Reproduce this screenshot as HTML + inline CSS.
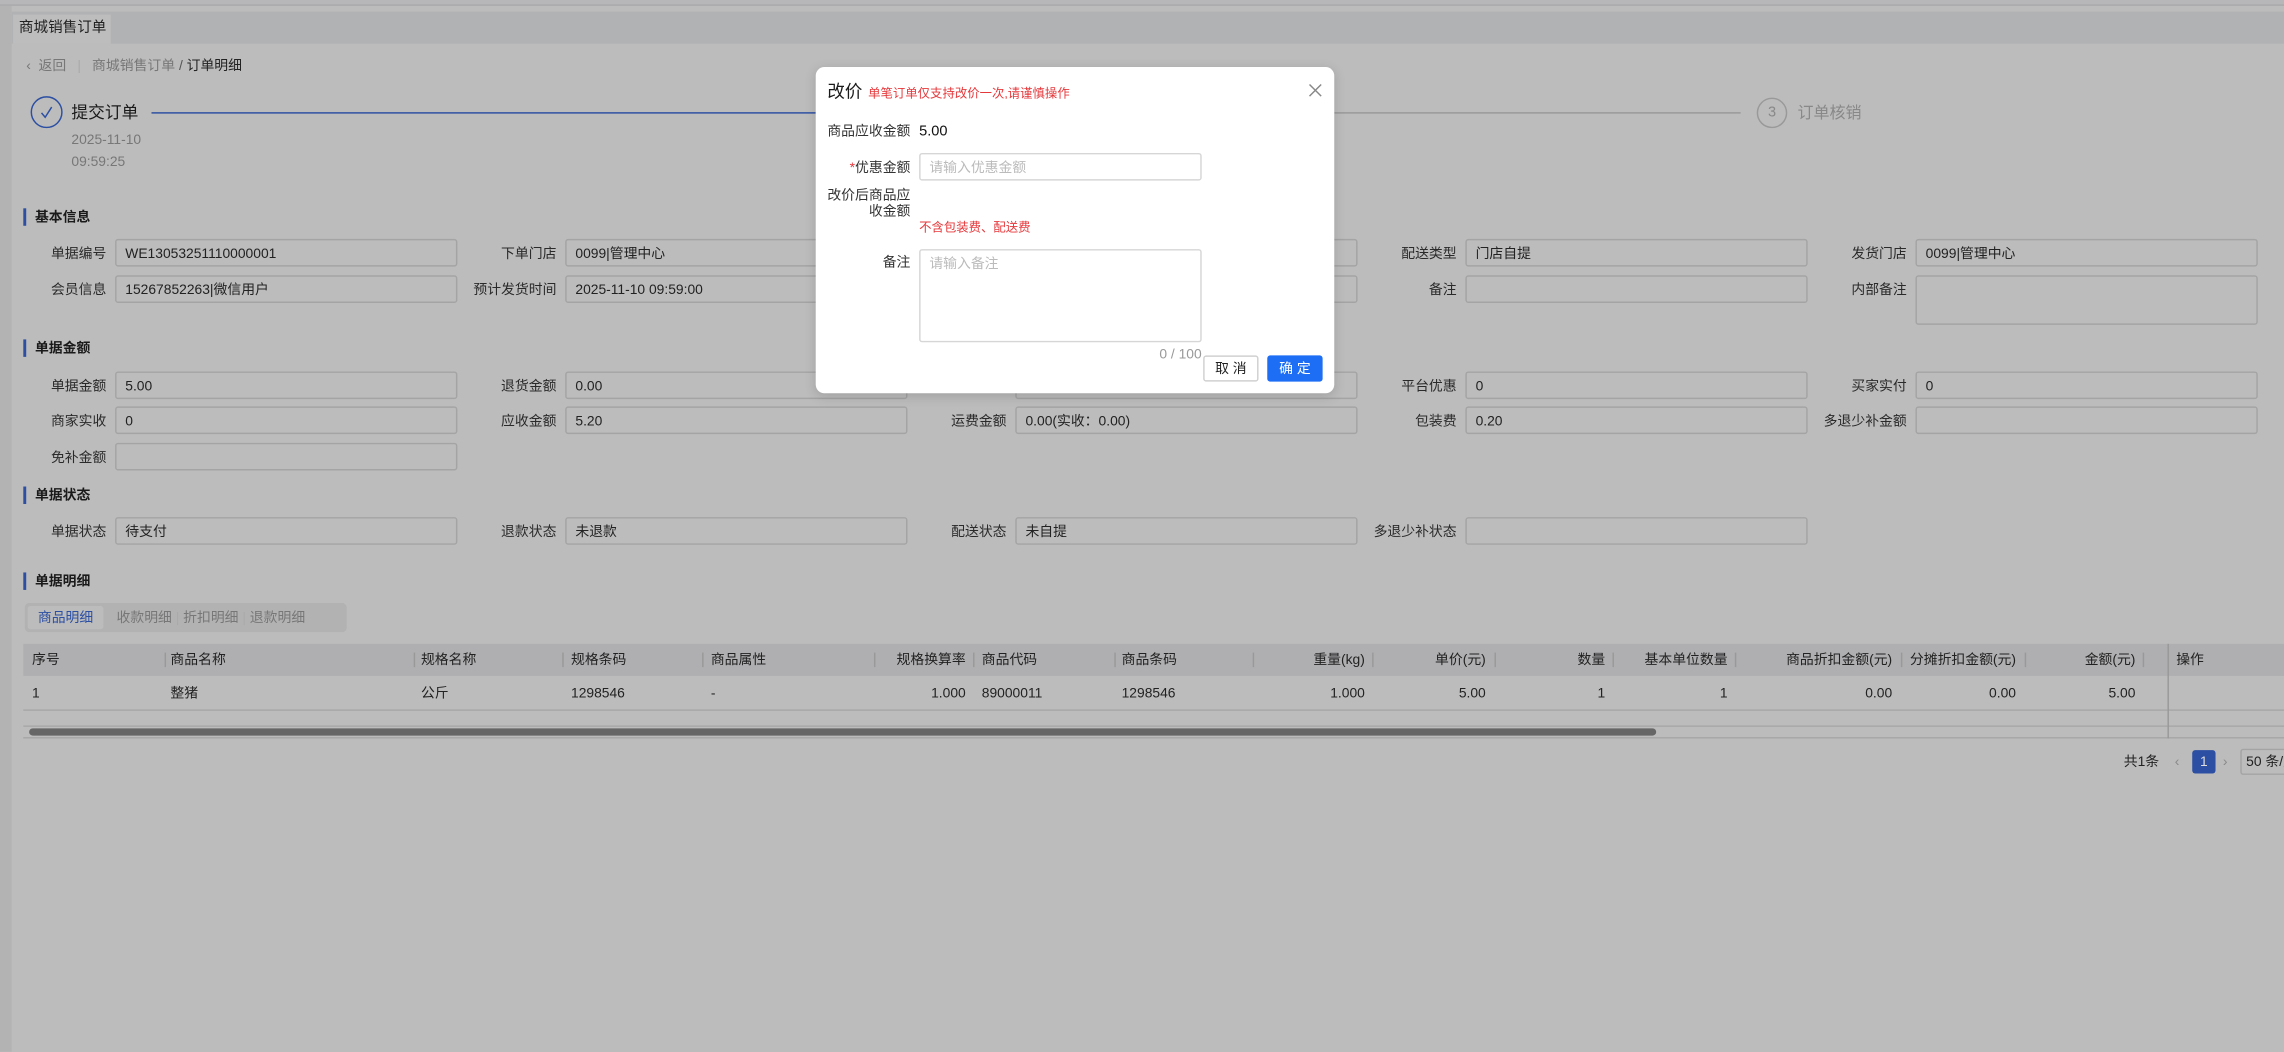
<!DOCTYPE html>
<html><head><meta charset="utf-8">
<style>
*{box-sizing:border-box;margin:0;padding:0}
html,body{width:2284px;height:1052px;overflow:hidden;background:#bcbcbc}
#w{position:absolute;left:0;top:0;width:1568px;height:722px;transform:scale(1.45663);transform-origin:0 0;background:#bcbcbc;font-family:"Liberation Sans","Noto Sans CJK SC",sans-serif;color:#222;font-size:9.5px}
.a{position:absolute;white-space:nowrap}
.lb{position:absolute;text-align:right;width:110px;line-height:19px;padding-top:1px;color:#2a2a2a}
.in{position:absolute;width:235px;height:19px;border:1px solid #a4a4a4;border-radius:2px;line-height:18px;padding-top:1px;padding-left:6px;color:#222}
.sec{position:absolute;left:16px;height:12px;border-left:2.5px solid #2c4fa3;padding-left:6px;line-height:13px;font-weight:bold;font-size:9.5px;color:#1a1a1a}
.th{position:absolute;top:443px;height:22px;line-height:22px}
.td{position:absolute;top:465px;height:23px;line-height:23px}
.sep{position:absolute;top:448px;width:1px;height:10px;background:#999}
.r{text-align:right}
</style></head><body><div id="w">
<div class="a" style="left:0;top:0;width:1568px;height:4px;background:#b7b7b9;border-bottom:1px solid #a9a9ab"></div>
<div class="a" style="left:0;top:4px;width:8px;height:718px;background:#b3b3b4"></div>
<div class="a" style="left:8px;top:8px;width:1560px;height:22px;background:#b1b2b4"></div>
<div class="a" style="left:9px;top:10px;width:67px;height:20px;background:#bdbdbd;line-height:20px;padding-left:4px;font-size:10px;color:#222">商城销售订单</div>
<div class="a" style="left:18px;top:40px;line-height:12px;color:#777">‹&nbsp; 返回 <span style="color:#aaa;margin:0 5px">|</span> 商城销售订单 <span style="color:#555">/</span> <span style="color:#222">订单明细</span></div>
<!-- steps -->
<div class="a" style="left:21px;top:66px;width:22px;height:22px;border:1px solid #2c4fa3;border-radius:50%"></div>
<svg class="a" style="left:26px;top:71px" width="12" height="12" viewBox="0 0 12 12"><path d="M2.5 6.5L5 9.5L9.5 2.5" fill="none" stroke="#2c4fa3" stroke-width="1"/></svg>
<div class="a" style="left:49px;top:70px;font-size:11.5px;line-height:16px;color:#1a1a1a">提交订单</div>
<div class="a" style="left:104px;top:77px;width:456px;height:1px;background:#2c4fa3"></div>
<div class="a" style="left:916px;top:77px;width:279px;height:1px;background:#999"></div>
<div class="a" style="left:1206px;top:67px;width:21px;height:21px;border:1px solid #999;border-radius:50%;color:#888;text-align:center;line-height:19px;font-size:10px">3</div>
<div class="a" style="left:1234px;top:70px;font-size:11px;line-height:16px;color:#888">订单核销</div>
<div class="a" style="left:49px;top:91px;color:#777;line-height:12px">2025-11-10</div>
<div class="a" style="left:49px;top:106px;color:#777;line-height:12px">09:59:25</div>

<div class="sec" style="top:143px">基本信息</div>
<div class="lb" style="left:-37px;top:164px">单据编号</div><div class="in" style="left:79px;top:164px">WE13053251110000001</div>
<div class="lb" style="left:272px;top:164px">下单门店</div><div class="in" style="left:388px;top:164px">0099|管理中心</div>
<div class="in" style="left:697px;top:164px"></div>
<div class="lb" style="left:890px;top:164px">配送类型</div><div class="in" style="left:1006px;top:164px">门店自提</div>
<div class="lb" style="left:1199px;top:164px">发货门店</div><div class="in" style="left:1315px;top:164px">0099|管理中心</div>
<div class="lb" style="left:-37px;top:189px">会员信息</div><div class="in" style="left:79px;top:189px">15267852263|微信用户</div>
<div class="lb" style="left:272px;top:189px">预计发货时间</div><div class="in" style="left:388px;top:189px">2025-11-10 09:59:00</div>
<div class="in" style="left:697px;top:189px"></div>
<div class="lb" style="left:890px;top:189px">备注</div><div class="in" style="left:1006px;top:189px"></div>
<div class="lb" style="left:1199px;top:189px">内部备注</div><div class="in" style="left:1315px;top:189px;height:34px"></div>

<div class="sec" style="top:233px">单据金额</div>
<div class="lb" style="left:-37px;top:255px">单据金额</div><div class="in" style="left:79px;top:255px">5.00</div>
<div class="lb" style="left:272px;top:255px">退货金额</div><div class="in" style="left:388px;top:255px">0.00</div>
<div class="in" style="left:697px;top:255px"></div>
<div class="lb" style="left:890px;top:255px">平台优惠</div><div class="in" style="left:1006px;top:255px">0</div>
<div class="lb" style="left:1199px;top:255px">买家实付</div><div class="in" style="left:1315px;top:255px">0</div>
<div class="lb" style="left:-37px;top:279px">商家实收</div><div class="in" style="left:79px;top:279px">0</div>
<div class="lb" style="left:272px;top:279px">应收金额</div><div class="in" style="left:388px;top:279px">5.20</div>
<div class="lb" style="left:581px;top:279px">运费金额</div><div class="in" style="left:697px;top:279px">0.00(实收：0.00)</div>
<div class="lb" style="left:890px;top:279px">包装费</div><div class="in" style="left:1006px;top:279px">0.20</div>
<div class="lb" style="left:1199px;top:279px">多退少补金额</div><div class="in" style="left:1315px;top:279px"></div>
<div class="lb" style="left:-37px;top:304px">免补金额</div><div class="in" style="left:79px;top:304px"></div>

<div class="sec" style="top:334px">单据状态</div>
<div class="lb" style="left:-37px;top:355px">单据状态</div><div class="in" style="left:79px;top:355px">待支付</div>
<div class="lb" style="left:272px;top:355px">退款状态</div><div class="in" style="left:388px;top:355px">未退款</div>
<div class="lb" style="left:581px;top:355px">配送状态</div><div class="in" style="left:697px;top:355px">未自提</div>
<div class="lb" style="left:890px;top:355px">多退少补状态</div><div class="in" style="left:1006px;top:355px"></div>

<div class="sec" style="top:393px">单据明细</div>
<div class="a" style="left:17px;top:414px;width:221px;height:20px;background:#b2b2b3;border-radius:3px"></div>
<div class="a" style="left:19px;top:416px;width:52px;height:16px;background:#bcbcbd;border-radius:2px;color:#2c4fa3;text-align:center;line-height:17px">商品明细</div>
<div class="a" style="left:80px;top:416px;line-height:17px;color:#777">收款明细 <span style="color:#aaa">|</span> 折扣明细 <span style="color:#aaa">|</span> 退款明细</div>

<div class="a" style="left:16px;top:442px;width:1552px;height:22px;background:#afafb1"></div>
<div class="a" style="left:16px;top:487px;width:1552px;height:1px;background:#a7a7a7"></div>
<div class="a" style="left:16px;top:498px;width:1552px;height:1px;background:#a7a7a7"></div>
<div class="a" style="left:16px;top:506px;width:1552px;height:1px;background:#a7a7a7"></div>
<div class="a" style="left:20px;top:500px;width:1117px;height:5px;background:#666;border-radius:3px"></div>
<div class="a" style="left:1488px;top:442px;width:1px;height:65px;background:#999"></div>
<div class="sep" style="left:113px"></div><div class="sep" style="left:284px"></div><div class="sep" style="left:386px"></div><div class="sep" style="left:482px"></div><div class="sep" style="left:600px"></div><div class="sep" style="left:668px"></div><div class="sep" style="left:765px"></div><div class="sep" style="left:860px"></div><div class="sep" style="left:942px"></div><div class="sep" style="left:1026px"></div><div class="sep" style="left:1107px"></div><div class="sep" style="left:1191px"></div><div class="sep" style="left:1305px"></div><div class="sep" style="left:1390px"></div><div class="sep" style="left:1471px"></div>
<div class="th" style="left:22px">序号</div><div class="th" style="left:117px">商品名称</div><div class="th" style="left:289px">规格名称</div><div class="th" style="left:392px">规格条码</div><div class="th" style="left:488px">商品属性</div>
<div class="th r" style="left:563px;width:100px">规格换算率</div><div class="th" style="left:674px">商品代码</div><div class="th" style="left:770px">商品条码</div>
<div class="th r" style="left:837px;width:100px">重量(kg)</div><div class="th r" style="left:920px;width:100px">单价(元)</div><div class="th r" style="left:1002px;width:100px">数量</div><div class="th r" style="left:1086px;width:100px">基本单位数量</div><div class="th r" style="left:1199px;width:100px">商品折扣金额(元)</div><div class="th r" style="left:1284px;width:100px">分摊折扣金额(元)</div><div class="th r" style="left:1366px;width:100px">金额(元)</div><div class="th" style="left:1494px">操作</div>
<div class="td" style="left:22px">1</div><div class="td" style="left:117px">整猪</div><div class="td" style="left:289px">公斤</div><div class="td" style="left:392px">1298546</div><div class="td" style="left:488px">-</div>
<div class="td r" style="left:563px;width:100px">1.000</div><div class="td" style="left:674px">89000011</div><div class="td" style="left:770px">1298546</div>
<div class="td r" style="left:837px;width:100px">1.000</div><div class="td r" style="left:920px;width:100px">5.00</div><div class="td r" style="left:1002px;width:100px">1</div><div class="td r" style="left:1086px;width:100px">1</div><div class="td r" style="left:1199px;width:100px">0.00</div><div class="td r" style="left:1284px;width:100px">0.00</div><div class="td r" style="left:1366px;width:100px">5.00</div>

<div class="a" style="left:1458px;top:517px;line-height:14px">共1条</div>
<div class="a" style="left:1493px;top:517px;line-height:14px;color:#888">‹</div>
<div class="a" style="left:1505px;top:515px;width:16px;height:16px;background:#2c4fa3;border-radius:2px;color:#ddd;text-align:center;line-height:17px">1</div>
<div class="a" style="left:1526px;top:517px;line-height:14px;color:#888">›</div>
<div class="a" style="left:1538px;top:514px;width:40px;height:18px;border:1px solid #a4a4a4;border-radius:2px;line-height:17px;padding-left:3px">50 条/页</div>

<!-- modal -->
<div class="a" style="left:560px;top:46px;width:356px;height:224px;background:#fff;border-radius:6px;box-shadow:0 2px 8px rgba(0,0,0,.15)"></div>
<div class="a" style="left:568px;top:55px;font-size:12px;line-height:16px;color:#1a1a1a">改价</div>
<div class="a" style="left:596px;top:58px;font-size:8.5px;line-height:12px;color:#e5383b">单笔订单仅支持改价一次,请谨慎操作</div>
<svg class="a" style="left:898px;top:57px" width="10" height="10" viewBox="0 0 10 10"><path d="M1 1L9 9M9 1L1 9" stroke="#888" stroke-width="1"/></svg>
<div class="a" style="left:515px;top:84px;width:110px;text-align:right;line-height:14px;color:#333">商品应收金额</div>
<div class="a" style="left:631px;top:84px;line-height:14px;font-size:10px;color:#111">5.00</div>
<div class="a" style="left:515px;top:109px;width:110px;text-align:right;line-height:14px;color:#333"><span style="color:#e5383b">*</span>优惠金额</div>
<div class="a" style="left:631px;top:105px;width:194px;height:19px;border:1px solid #d6d6d6;border-radius:2px;line-height:19px;padding-left:6px;color:#bbb">请输入优惠金额</div>
<div class="a" style="left:560px;top:129px;width:65px;text-align:right;line-height:11px;color:#333;white-space:normal">改价后商品应<br>收金额</div>
<div class="a" style="left:631px;top:150px;font-size:8.5px;line-height:12px;color:#e5383b">不含包装费、配送费</div>
<div class="a" style="left:515px;top:174px;width:110px;text-align:right;line-height:14px;color:#333">备注</div>
<div class="a" style="left:631px;top:171px;width:194px;height:64px;border:1px solid #d6d6d6;border-radius:2px;line-height:19px;padding-left:6px;color:#bbb">请输入备注</div>
<div class="a" style="left:765px;top:238px;width:60px;text-align:right;line-height:12px;color:#999">0 / 100</div>
<div class="a" style="left:826px;top:244px;width:38px;height:18px;border:1px solid #d0d0d0;border-radius:2px;text-align:center;line-height:17px;color:#222">取 消</div>
<div class="a" style="left:870px;top:244px;width:38px;height:18px;background:#1e6ef5;border-radius:2px;text-align:center;line-height:19px;color:#fff">确 定</div>
</div></body></html>
